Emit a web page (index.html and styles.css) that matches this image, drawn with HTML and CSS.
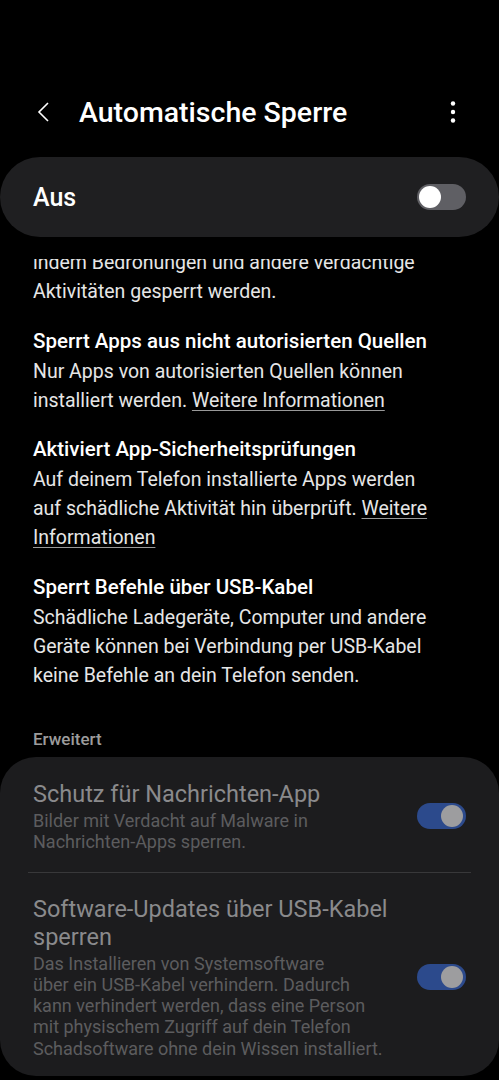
FILE: index.html
```html
<!DOCTYPE html>
<html lang="de">
<head>
    <meta charset="UTF-8">
    <meta name="viewport" content="width=device-width, initial-scale=1.0">
    <title>Automatische Sperre</title>
    <link rel="stylesheet" href="styles.css">
</head>
<body>
    <header class="appbar">
        <a href="#" class="back">
            <svg width="14" height="20" viewBox="0 0 14 20"><path d="M12 1 L3 10 L12 19" fill="none" stroke="#fff" stroke-width="1.6"/></svg>
        </a>
        <h1>Automatische Sperre</h1>
        <a href="#" class="more">
            <svg width="6" height="24" viewBox="0 0 6 24"><circle cx="3" cy="3.5" r="2.2" fill="#fff"/><circle cx="3" cy="12" r="2.2" fill="#fff"/><circle cx="3" cy="20.5" r="2.2" fill="#fff"/></svg>
        </a>
    </header>

    <div class="master">
        <span>Aus</span>
        <span class="switch"></span>
    </div>

    <div class="content">
        <div class="scroll">
            <p>indem Bedrohungen und andere verdächtige Aktivitäten gesperrt werden.</p>

            <h3>Sperrt Apps aus nicht autorisierten Quellen</h3>
            <p>Nur Apps von autorisierten Quellen können installiert werden. <a href="#">Weitere Informationen</a></p>

            <h3>Aktiviert App-Sicherheitsprüfungen</h3>
            <p>Auf deinem Telefon installierte Apps werden auf schädliche Aktivität hin überprüft. <a href="#">Weitere Informationen</a></p>

            <h3>Sperrt Befehle über USB-Kabel</h3>
            <p>Schädliche Ladegeräte, Computer und andere Geräte können bei Verbindung per USB-Kabel keine Befehle an dein Telefon senden.</p>
        </div>

        <div class="section-title">Erweitert</div>

        <div class="card">
            <div class="row">
                <div class="text">
                    <h4>Schutz für Nachrichten-App</h4>
                    <p>Bilder mit Verdacht auf Malware in<br>Nachrichten-Apps sperren.</p>
                </div>
                <span class="switch on"></span>
            </div>
            <div class="divider"></div>
            <div class="row">
                <div class="text">
                    <h4>Software-Updates über USB-Kabel sperren</h4>
                    <p>Das Installieren von Systemsoftware<br>über ein USB-Kabel verhindern. Dadurch<br>kann verhindert werden, dass eine Person<br>mit physischem Zugriff auf dein Telefon<br>Schadsoftware ohne dein Wissen installiert.</p>
                </div>
                <span class="switch on"></span>
            </div>
        </div>
    </div>
</body>
</html>
```

FILE: styles.css
```css
* {
    margin: 0;
    padding: 0;
    box-sizing: border-box;
    font-family: Roboto, "Liberation Sans", sans-serif;
}

body {
    background-color: #000;
    color: #fff;
    width: 499px;
    height: 1080px;
    overflow: hidden;
}

.appbar {
    display: flex;
    align-items: center;
    height: 56px;
    margin-top: 84px;
    padding: 0 33px 0 36px;
}

.back {
    display: flex;
    width: 43px;
}

.appbar h1 {
    flex: 1;
    font-size: 28.5px;
    font-weight: 500;
    color: #fff;
    white-space: nowrap;
}

.more {
    display: flex;
    margin-right: 10px;
}

.master {
    display: flex;
    align-items: center;
    justify-content: space-between;
    height: 80px;
    margin-top: 17px;
    padding: 0 33px;
    background: #1f1f21;
    border-radius: 40px;
    font-size: 25px;
    font-weight: 500;
}

.switch {
    position: relative;
    display: block;
    flex: none;
    width: 49px;
    height: 26px;
    border-radius: 13px;
    background: #5f5f64;
}

.switch::after {
    content: "";
    position: absolute;
    top: 2px;
    left: 2px;
    width: 22px;
    height: 22px;
    border-radius: 50%;
    background: #fff;
}

.switch.on {
    background: #2c4a8c;
}

.switch.on::after {
    left: auto;
    right: 3px;
    background: #9d9d9f;
}

/* list is scrolled: the first line is cut under the top bar */
.content {
    margin-top: 22px;
    overflow: hidden;
}

.scroll {
    margin-top: -11px;
    padding: 0 60px 0 33px;
}

.scroll p {
    font-size: 19.5px;
    line-height: 29px;
    color: #e6e6e6;
}

.scroll h3 {
    font-size: 20.5px;
    font-weight: 500;
    line-height: 30px;
    margin: 19.5px -30px 1px 0;
    color: #fff;
    white-space: nowrap;
}

.scroll a {
    color: #e6e6e6;
    text-decoration: underline;
    text-decoration-color: #999;
    text-underline-offset: 3px;
}

.section-title {
    margin-top: 38.5px;
    padding: 0 33px;
    font-size: 17px;
    font-weight: 500;
    line-height: 22px;
    color: #9c9c9c;
}

.card {
    margin-top: 7px;
    background: #1c1c1e;
    border-radius: 36px;
}

.row {
    display: flex;
    align-items: center;
    padding: 23px 33px 19px;
}

.row + .divider + .row {
    padding: 22px 33px 17px;
}

.text {
    width: 372px;
    padding-right: 10px;
}

.text h4 {
    font-size: 23.5px;
    font-weight: 400;
    line-height: 28px;
    color: #8a8a8c;
}

.text p {
    margin-top: 2px;
    font-size: 18px;
    line-height: 21.3px;
    color: #5c5c5e;
    white-space: nowrap;
}

.row .switch {
    margin-left: auto;
}

.divider {
    height: 1px;
    margin: 0 28px;
    background: #38383a;
}
```
